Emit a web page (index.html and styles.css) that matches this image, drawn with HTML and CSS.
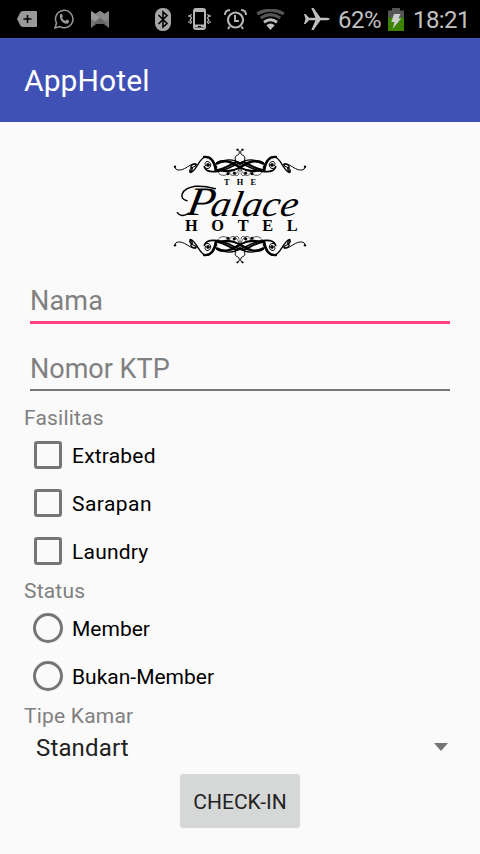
FILE: index.html
```html
<!DOCTYPE html>
<html lang="id">
<head>
<meta charset="utf-8">
<meta name="viewport" content="width=device-width">
<title>AppHotel</title>
<link rel="stylesheet" href="styles.css">
</head>
<body>
<header class="status-bar">
  <div class="notifications">
    <svg width="20" height="16" viewBox="0 0 20 16"><path d="M6 0h13q1 0 1 1v14q0 1-1 1H6Q4 16 3 14L0 8l3-6Q4 0 6 0z" fill="#999"/><path d="M10.500 4v8M6.500 8h8" stroke="#000" stroke-width="1.600"/></svg>
    <svg width="20" height="20" viewBox="0 0 20 20"><path d="M1 19l1.500-5A8.700 8.700 0 1 1 6 17.600z" fill="none" stroke="#999" stroke-width="1.500"/><path d="M6.200 5.200q1.300-1 2 .2l.8 1.900-1 1.400q1.200 2.300 3.500 3.200l1.200-1.300 2.300 1.100q.5 2.500-2.600 3C8.400 14.300 4.600 9.500 6.200 5.200z" fill="#999"/></svg>
    <svg width="18" height="18" viewBox="0 0 18 18"><path d="M0 1l4.500 3L9 1l4.500 3L18 1v17l-5-4H5l-5 4z" fill="#777"/><path d="M0 1l9 6-4.500 4.500L0 9z" fill="#999"/><path d="M18 1L9 7l4.500 4.500L18 9z" fill="#888"/><path d="M4 4l5-3 5 3-5 4z" fill="#888"/><path d="M0 18l4.500-6.500L9 8l4.500 3.500L18 18l-5-4H5z" fill="#666"/></svg>
  </div>
  <div class="indicators">
    <svg width="16" height="23" viewBox="0 0 16 23"><rect width="16" height="23" rx="7.500" fill="#a6a6a6"/><path d="M3.500 7l8.500 8.500-4 3.500V4l4 3.500L3.500 16" fill="none" stroke="#000" stroke-width="1.600"/></svg>
    <svg class="vibrate" width="23" height="22" viewBox="0 0 23 22"><rect x="6" y="1" width="11" height="20" rx="2" fill="none" stroke="#b5b5b5" stroke-width="2"/><path d="M6 2.500h11M6 18h11" stroke="#b5b5b5" stroke-width="3"/><path d="M10 18.500h3" stroke="#000"/><path d="M3.500 6l-1.300 2 1.300 2-1.300 2 1.300 2-1.300 2M1 7v2M1 13v2M19.500 6l1.300 2-1.300 2 1.300 2-1.300 2 1.300 2M22 7v2M22 13v2" fill="none" stroke="#b5b5b5" stroke-width="1.300"/></svg>
    <svg class="alarm" width="23" height="21" viewBox="0 0 23 21"><circle cx="11.500" cy="11" r="7.500" fill="none" stroke="#b5b5b5" stroke-width="2.200"/><path d="M11 6v6h4M5.500 17.500L4 20M17.500 17.500L19 20" fill="none" stroke="#b5b5b5" stroke-width="1.900"/><path d="M1 6Q1 1 6 1M22 6q0-5-5-5" fill="none" stroke="#b5b5b5" stroke-width="2"/></svg>
    <svg class="wifi" width="29" height="21" viewBox="0 0 29 21"><g fill="none" stroke="#555" stroke-width="3.200"><path d="M1.200 4.800q13.300-7.500 26.600 0M4.800 9q9.700-6.600 19.400 0"/></g><path d="M8 13.200q6.500-5 13 0" fill="none" stroke="#c0c0c0" stroke-width="3"/><path d="M10.300 16.200q4.200-3.200 8.400 0L14.500 21z" fill="#c0c0c0"/></svg>
    <svg class="plane" width="26" height="22" viewBox="0 0 26 22"><path d="M0 6h1.500l3.500 3.800h6.500L7.300 0h2.200l7 9.800H23q2.500.3 3 1.200-.5.900-3 1.200h-6.500l-7 9.800H7.300l4.200-9.800H5L1.500 16H0l1.500-5z" fill="#c0c0c0"/></svg>
    <span class="percent">62%</span>
    <svg class="battery" width="16" height="23" viewBox="0 0 16 23"><path d="M0 2.500h4V0h8v2.500h4V10H0z" fill="#555"/><path d="M0 9.500h16V23H0z" fill="#3c8400"/><path d="M6 6h6.500l-2 4.500h2.700L4.500 21l2-7H3.300z" fill="#ccc"/></svg>
    <span class="clock">18:21</span>
  </div>
</header>
<div class="app-bar"><h1>AppHotel</h1></div>
<main class="form">
  <svg class="logo" width="136" height="118" viewBox="21 21 408 354" role="img">
    <defs>
      <g id="half" fill="none" stroke="#000" stroke-linecap="round">
        <path d="M29 80c2 13 17 12 29 6 14-7 23-17 35-14" stroke-width="3"/>
        <circle cx="30" cy="80" r="3.500" fill="#000" stroke="none"/>
        <path d="M75 96c-4-8 5-13 16-18 4-3 3-6-1-6-10 0-15 8-11 11 7 3-1 12-4 13z" stroke-width="4"/>
        <path d="M76 98c20-5 26-47 48-48 17 0 26 20 31 32" stroke-width="4"/>
        <path d="M117 51c25-2 29 16 36 38" stroke-width="7"/>
        <path d="M122 77c-8-13 9-17 14-7 5 13-9 21-17 12" stroke-width="3"/>
        <circle cx="129" cy="75" r="5" fill="#000"/>
        <path d="M118 80c4 15 25 16 40 14 31-4 46-19 76-29" stroke-width="5"/>
        <path d="M152 93c-8-23 8-32 27-31 23 1 32 9 50 22 18 12 47 15 68 3" stroke-width="4"/>
        <path d="M156 72c31-17 48 1 71 12 20 9 36 11 57 6" stroke-width="5"/>
        <path d="M152 91c25-2 43-17 62-25" stroke-width="6"/>
        <path d="M156 68c23-8 49-15 68 4" stroke-width="4"/>
        <path d="M222 73c-14-9-15-25-5-27 9-3 7-17 0-18" stroke-width="3"/>
        <circle cx="217" cy="29" r="2.500" fill="#000"/>
        <path d="M159 96c5 13 22 12 29 6M194 97c1 14 17 11 23 0 5-9 12-15 8-20s-11 7 0 17M205 101c9 11 17 5 17-2" stroke-width="2"/>
        <circle cx="189" cy="101" r="4" fill="#000"/>
        <circle cx="208" cy="99" r="4" fill="#000"/>
      </g>
      <g id="ornament"><use href="#half"/><use href="#half" transform="matrix(-1 0 0 1 450 0)"/></g>
    </defs>
    <use href="#ornament"/>
    <use href="#ornament" transform="matrix(1 0 0 -1 0 396)"/>
    <text class="logo-the" x="177" y="135" textLength="96">THE</text>
    <g transform="translate(0 229) skewX(-10)">
      <text class="logo-initial" x="61" y="-3" textLength="84" lengthAdjust="spacingAndGlyphs">P</text>
      <text class="logo-script" x="133" y="0" textLength="262" lengthAdjust="spacingAndGlyphs">alace</text>
    </g>
    <path d="M66 182c-26-5-20-36 25-43 24-2 41 2 60 7M72 219c-16 12-29 8-35-1" fill="none" stroke="#000" stroke-width="4.500" stroke-linecap="round"/>
    <text class="logo-hotel" x="60" y="274" textLength="338">HOTEL</text>
  </svg>
  <div class="field focused"><span>Nama</span></div>
  <div class="field id-field"><span>Nomor KTP</span></div>
  <h2 class="facilities-title">Fasilitas</h2>
  <div class="options">
    <div class="option"><i class="checkbox"></i><span>Extrabed</span></div>
    <div class="option"><i class="checkbox"></i><span class="wide">Sarapan</span></div>
    <div class="option"><i class="checkbox"></i><span>Laundry</span></div>
  </div>
  <h2>Status</h2>
  <div class="options">
    <div class="option"><i class="radio"></i><span class="regular">Member</span></div>
    <div class="option"><i class="radio"></i><span class="regular">Bukan-Member</span></div>
  </div>
  <h2 class="room-title">Tipe Kamar</h2>
  <div class="select"><span>Standart</span><svg width="14" height="8" viewBox="0 0 14 8"><path d="M0 0h14L7 8z" fill="#757575"/></svg></div>
  <button class="submit">CHECK-IN</button>
</main>
</body>
</html>
```
FILE: styles.css
```css
* { box-sizing: border-box; }
body { margin: 0; width: 480px; height: 854px; overflow: hidden; background: #fafafa; color: #000; font-family: Roboto, "Liberation Sans", sans-serif; }
svg { display: block; flex-shrink: 0; }
.status-bar { display: flex; height: 38px; background: #000; color: #c0c0c0; }
.notifications { display: flex; align-items: center; gap: 17px; width: 155px; padding-left: 17px; }
.indicators { display: flex; align-items: center; flex: 1; font-size: 24px; line-height: 38px; }
.vibrate { margin-left: 17px; }
.alarm { margin-left: 13px; }
.wifi { margin-left: 9px; }
.plane { margin-left: 19px; }
.percent { width: 49px; margin-left: 8px; padding-top: 1px; letter-spacing: -.5px; white-space: nowrap; }
.battery { margin-left: 1px; }
.clock { margin-left: 9px; padding-top: 1px; letter-spacing: -.6px; }
.app-bar { display: flex; align-items: center; height: 84px; padding: 2px 24px 0; background: #3f51b5; color: #fff; }
h1 { margin: 0; font-size: 30px; font-weight: 400; line-height: 36px; letter-spacing: .1px; }
.form { display: flex; flex-direction: column; padding: 25px 24px 0; }
.logo { align-self: center; }
.logo-the { font: bold 25px "Liberation Serif", serif; }
.logo-script { font: italic 108px "Liberation Serif", serif; }
.logo-initial { font: italic 122px "Liberation Serif", serif; }
.logo-hotel { font: bold 49px "Liberation Serif", serif; }
.field { height: 50px; margin: 9px 6px 0; border-bottom: 2px solid #757575; color: #808080; font-size: 27px; line-height: 54px; }
.focused { border-bottom: 3px solid #ff4081; letter-spacing: .2px; }
.id-field { height: 47px; margin-top: 20px; line-height: 51px; }
h2 { height: 29px; margin: 0; color: #808080; font-size: 21px; font-weight: 400; line-height: 32px; letter-spacing: .2px; }
.facilities-title { height: 28px; margin-top: 12px; line-height: 31px; }
.options { display: grid; grid-auto-rows: 48px; }
.option { display: flex; align-items: center; gap: 10px; padding-left: 10px; font-size: 21px; line-height: 26px; letter-spacing: .2px; }
.option span { padding-top: 2px; }
.option .wide { letter-spacing: .45px; }
.option .regular { letter-spacing: 0; }
.checkbox { width: 28px; height: 28px; border: 3px solid #757575; border-radius: 3px; }
.radio { width: 30px; height: 30px; margin: 0 -1px; border: 3px solid #757575; border-radius: 50%; }
.select { display: flex; align-items: center; justify-content: space-between; height: 36px; padding: 0 8px 0 12px; color: #222; font-size: 24px; letter-spacing: .15px; }
.select span { padding-top: 2px; }
.submit { align-self: center; width: 120px; height: 54px; margin-top: 9px; padding: 2px 0 0; border: 0; border-radius: 3px; background: #d6d8d7; color: #222; font: 21px Roboto, sans-serif; }
```
